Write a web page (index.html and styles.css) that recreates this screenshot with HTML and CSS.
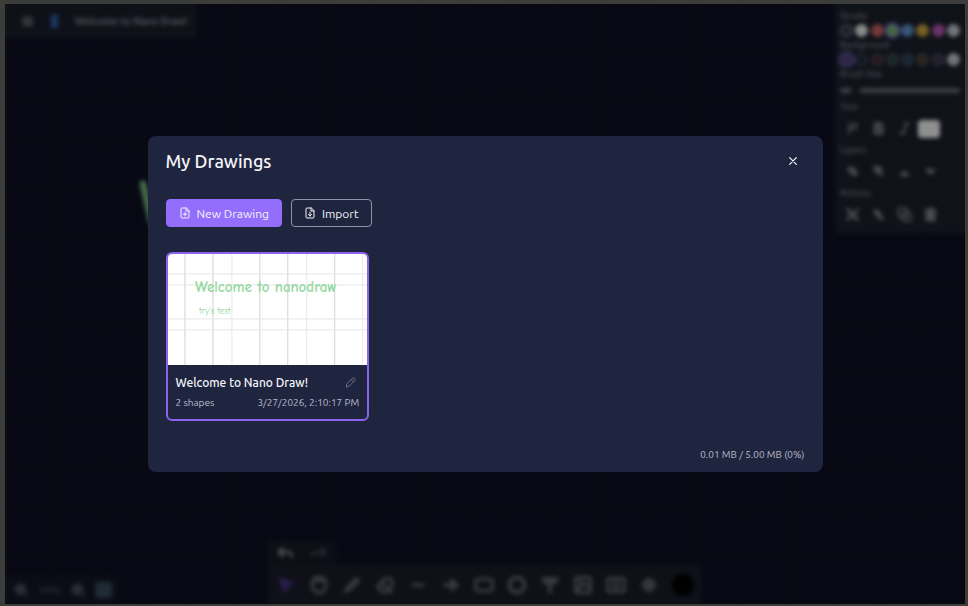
FILE: index.html
```html
<!DOCTYPE html>
<html lang="en">

<head>
    <meta charset="UTF-8">
    <meta name="viewport" content="width=device-width, initial-scale=1.0">
    <title>Nano Draw</title>
    <link rel="stylesheet" href="styles.css">
</head>

<body>
    <div class="app">
        <!-- Canvas -->
        <svg class="canvas" aria-hidden="true">
            <path d="M138 180 L147 218 L158 190" />
        </svg>

        <div class="top-row">
            <header class="title-bar">
                <button class="icon-btn" aria-label="Menu">
                    <svg viewBox="0 0 24 24"><path d="M4 6h16M4 12h16M4 18h16" stroke-width="4" /></svg>
                </button>
                <span class="logo"></span>
                <span class="doc-name">Welcome to Nano Draw!</span>
            </header>

            <aside class="side-panel">
                <h3>Stroke</h3>
                <div class="swatches">
                    <button class="swatch none" aria-label="None"></button>
                    <button class="swatch white" aria-label="White"></button>
                    <button class="swatch red" aria-label="Red"></button>
                    <button class="swatch green selected" aria-label="Green"></button>
                    <button class="swatch blue" aria-label="Blue"></button>
                    <button class="swatch yellow" aria-label="Yellow"></button>
                    <button class="swatch pink" aria-label="Pink"></button>
                    <button class="swatch custom" aria-label="Custom"></button>
                </div>
                <h3>Background</h3>
                <div class="swatches dim">
                    <button class="swatch none selected" aria-label="No background"></button>
                    <button class="swatch none" aria-label="Dark background"></button>
                    <button class="swatch red" aria-label="Red background"></button>
                    <button class="swatch green" aria-label="Green background"></button>
                    <button class="swatch blue" aria-label="Blue background"></button>
                    <button class="swatch yellow" aria-label="Yellow background"></button>
                    <button class="swatch pink" aria-label="Pink background"></button>
                    <button class="swatch custom" aria-label="Custom background"></button>
                </div>
                <h3><label for="brush">Brush Size</label></h3>
                <input class="slider" id="brush" type="range" min="1" max="30" value="4">
                <h3>Text</h3>
                <div class="tools">
                    <button class="icon-btn" aria-label="Font"><svg viewBox="0 0 24 24"><path d="M7 20V5h12M7 12h9M17 5v7" stroke-width="3" /></svg></button>
                    <button class="icon-btn" aria-label="Bold"><svg viewBox="0 0 24 24"><path d="M7 4h6a4 4 0 0 1 0 8H7zM7 12h7a4 4 0 0 1 0 8H7z" stroke-width="5" /></svg></button>
                    <button class="icon-btn" aria-label="Italic"><svg viewBox="0 0 24 24"><path d="M12 4h7M5 20h7M16 4 9 20" stroke-width="3" /></svg></button>
                    <button class="size-btn" aria-label="Text size"></button>
                </div>
                <h3>Layers</h3>
                <div class="tools">
                    <button class="icon-btn" aria-label="To front"><svg viewBox="0 0 24 24"><path d="m5 8 6-2 8 8-4 4zM13 9l-2 5" stroke-width="4" /></svg></button>
                    <button class="icon-btn" aria-label="Forward"><svg viewBox="0 0 24 24"><path d="M6 6h9v7H9zM15 14l2 3" stroke-width="5" /></svg></button>
                    <button class="icon-btn" aria-label="Backward"><svg viewBox="0 0 24 24"><path d="m6 18 6-5 6 5M9 17h6" stroke-width="4" /></svg></button>
                    <button class="icon-btn" aria-label="To back"><svg viewBox="0 0 24 24"><path d="m6 9 6 6 6-6M9 9h3" stroke-width="4" /></svg></button>
                </div>
                <h3>Actions</h3>
                <div class="tools">
                    <button class="icon-btn" aria-label="Cut"><svg viewBox="0 0 24 24"><path d="M4 4l16 16M20 4 4 20M4 4h3M20 20h-3M8 12h8" stroke-width="4" /></svg></button>
                    <button class="icon-btn" aria-label="Link"><svg viewBox="0 0 24 24"><path d="m7 5 5 3 3 7 4 4M6 8l4 5 4 5" stroke-width="4" /></svg></button>
                    <button class="icon-btn" aria-label="Duplicate"><svg viewBox="0 0 24 24"><rect x="2" y="2" width="14" height="14" rx="4" stroke-width="3" /><rect x="9" y="9" width="14" height="13" rx="4" stroke-width="3" /></svg></button>
                    <button class="icon-btn" aria-label="Delete"><svg viewBox="0 0 24 24"><path d="M4 6h16M9 6V3h6v3M6 6v15h12V6M10 10v7M14 10v7" stroke-width="4" /></svg></button>
                </div>
            </aside>
        </div>

        <div class="bottom-row">
            <div class="zoom-bar">
                <button class="icon-btn" aria-label="Zoom out"><svg viewBox="0 0 24 24"><circle cx="11" cy="11" r="8" fill="currentColor" /><path d="m16 16 5 5" stroke-width="4" /></svg></button>
                <span>100%</span>
                <button class="icon-btn" aria-label="Zoom in"><svg viewBox="0 0 24 24"><circle cx="11" cy="11" r="8" fill="currentColor" /><path d="m16 16 5 5" stroke-width="4" /></svg></button>
                <button class="grid-btn" aria-label="Grid"></button>
            </div>

            <div class="toolbar-wrap">
                <div class="history">
                    <button class="icon-btn" aria-label="Undo"><svg viewBox="0 0 24 24"><path d="M9 5 4 10l5 5M4 10h13q5 0 5 6" stroke-width="4" /></svg></button>
                    <button class="icon-btn faded" aria-label="Redo"><svg viewBox="0 0 24 24"><path d="m15 5 5 5-5 5M20 10H7q-5 0-5 6" stroke-width="3" /></svg></button>
                </div>
                <div class="toolbar">
                    <button class="icon-btn active" aria-label="Select"><svg viewBox="0 0 24 24"><path d="m4 4 17 6-7 3-3 8z" fill="currentColor" /></svg></button>
                    <button class="icon-btn" aria-label="Pan"><svg viewBox="0 0 24 24"><path d="M4 12V7l4-4h8l4 4v9l-5 5H9l-5-5zM7 7h10" stroke-width="4" /></svg></button>
                    <button class="icon-btn" aria-label="Pencil"><svg viewBox="0 0 24 24"><path d="m3 21 2-6L17 3l4 4L9 19z" fill="currentColor" /></svg></button>
                    <button class="icon-btn" aria-label="Eraser"><svg viewBox="0 0 24 24"><path d="m3 14 9-10h7l2 8-7 8H8zM8 9l8 8M7 20h13" stroke-width="4" /></svg></button>
                    <button class="icon-btn" aria-label="Line"><svg viewBox="0 0 24 24"><path d="M6 12h12" stroke-width="4" /></svg></button>
                    <button class="icon-btn" aria-label="Arrow"><svg viewBox="0 0 24 24"><path d="M5 12h14M13 7l5 5-5 5" stroke-width="5" /></svg></button>
                    <button class="icon-btn" aria-label="Rectangle"><svg viewBox="0 0 24 24"><rect x="2" y="5" width="20" height="14" rx="3" stroke-width="4" /></svg></button>
                    <button class="icon-btn" aria-label="Ellipse"><svg viewBox="0 0 24 24"><circle cx="12" cy="12" r="9" stroke-width="5" /></svg></button>
                    <button class="icon-btn" aria-label="Text"><svg viewBox="0 0 24 24"><path d="M4 5h16M6 9h12M12 7v13" stroke-width="5" /></svg></button>
                    <button class="icon-btn" aria-label="Image"><svg viewBox="0 0 24 24"><rect x="3" y="3" width="18" height="18" rx="2" stroke-width="4" /><path d="m5 18 8-8 7 5M8 8h2" stroke-width="4" /></svg></button>
                    <button class="icon-btn" aria-label="Camera"><svg viewBox="0 0 24 24"><rect x="2" y="4" width="20" height="16" rx="2" stroke-width="4" /><circle cx="12" cy="12" r="4" stroke-width="3" /></svg></button>
                    <button class="icon-btn" aria-label="Laser"><svg viewBox="0 0 24 24"><path d="M12 4v16M4 12h16M7 7l10 10M17 7 7 17" stroke-width="4" /></svg></button>
                    <button class="color-btn" aria-label="Current color"></button>
                </div>
            </div>
        </div>
    </div>

    <!-- My Drawings dialog -->
    <div class="overlay">
        <div class="modal" role="dialog" aria-labelledby="modalTitle">
            <div class="modal-header">
                <h2 id="modalTitle">My Drawings</h2>
                <button class="close-btn" aria-label="Close">
                    <svg viewBox="0 0 24 24"><path d="M4 4l16 16M20 4 4 20" stroke-width="3" /></svg>
                </button>
            </div>

            <div class="modal-actions">
                <button class="btn btn-primary">
                    <svg viewBox="0 0 24 24"><path d="M14 2H6a2 2 0 0 0-2 2v16a2 2 0 0 0 2 2h12a2 2 0 0 0 2-2V8zM14 2v6h6M12 11v7M8.500 14.500h7" /></svg>
                    New Drawing
                </button>
                <button class="btn">
                    <svg viewBox="0 0 24 24"><path d="M14 2H6a2 2 0 0 0-2 2v16a2 2 0 0 0 2 2h12a2 2 0 0 0 2-2V8zM14 2v6h6M12 10v8M9 15l3 3 3-3" /></svg>
                    Import
                </button>
            </div>

            <div class="drawings">
                <article class="card">
                    <svg class="thumb" viewBox="0 0 200 111">
                        <path class="grid-strong" d="M17 0v111M45 0v111M92 0v111M120 0v111M167 0v111" />
                        <path class="grid-light" d="M64 0v111M139 0v111M195 0v111M0 20h200M0 31h200M0 65h200M0 76h200" />
                        <text class="thumb-title" x="27" y="38">Welcome to nanodraw</text>
                        <text class="thumb-note" x="31" y="60">try's test</text>
                    </svg>
                    <div class="card-info">
                        <div class="card-row">
                            <h3>Welcome to Nano Draw!</h3>
                            <button class="edit-btn" aria-label="Rename">
                                <svg viewBox="0 0 24 24"><path d="m3 21 1-6L16 3a3 3 0 0 1 5 5L9 20zM14 6l4 4" /></svg>
                            </button>
                        </div>
                        <div class="card-row meta">
                            <span>2 shapes</span>
                            <span>3/27/2026, 2:10:17 PM</span>
                        </div>
                    </div>
                </article>
            </div>

            <div class="storage">0.01 MB / 5.00 MB (0%)</div>
        </div>
    </div>
</body>

</html>
```
FILE: styles.css
```css
* {
    margin: 0;
    padding: 0;
    box-sizing: border-box;
    font-family: Ubuntu, 'Noto Sans', sans-serif;
}

body {
    height: 100vh;
    border: solid #3c3d3a;
    border-width: 4px 3px 2px 5px;
    position: relative;
    overflow: hidden;
}

svg {
    display: block;
    fill: none;
    stroke: currentColor;
    stroke-width: 2;
    stroke-linecap: round;
    stroke-linejoin: round;
}

button {
    background: none;
    border: none;
    color: inherit;
    cursor: pointer;
}

.app {
    height: 100%;
    display: flex;
    flex-direction: column;
    justify-content: space-between;
    color: #7d808c;
    background-color: #0d0e20;
    background-image: linear-gradient(90deg, #111323 1px, transparent 1px), linear-gradient(#111323 1px, transparent 1px);
    background-size: 46px 46px;
}

.canvas {
    position: absolute;
    inset: 0;
    width: 100%;
    height: 100%;
    color: #74b27d;
    stroke-width: 7;
}

.top-row {
    display: flex;
    justify-content: space-between;
    align-items: flex-start;
}

.title-bar {
    display: flex;
    align-items: center;
    gap: 17px;
    height: 34px;
    padding: 0 10px 0 16px;
    background: #1a1d2a;
}

.logo {
    width: 7px;
    height: 13px;
    background: #2c5ea6;
}

.doc-name {
    font-size: 10px;
    font-weight: 700;
}

.icon-btn svg {
    width: 13px;
    height: 13px;
}

/* Side panel */
.side-panel {
    width: 130px;
    padding: 6px 5px 3px;
    background: #1a1f2a;
}

.side-panel h3 {
    font-size: 9px;
    font-weight: 500;
    line-height: 12px;
}

.swatches {
    display: flex;
    justify-content: space-between;
    padding: 2px 0;
}

.swatch {
    width: 13px;
    height: 13px;
    border-radius: 50%;
}

.swatch.none {
    background: #2f3341;
    border: 2px solid #686c7a;
}

.swatch.white {
    background: #e6e6e6;
}

.swatch.red {
    background: #c4605f;
}

.swatch.green {
    background: #72a979;
}

.swatch.blue {
    background: #578fc4;
}

.swatch.yellow {
    background: #c8a03c;
}

.swatch.pink {
    background: #b354ae;
}

.swatch.custom {
    background: #c0c2cc;
}

.swatch.selected {
    box-shadow: 0 0 0 2px #5f4aa5;
}

.dim .swatch {
    border: 2px solid #454858;
}

.dim .none {
    background: #1f2433;
}

.dim .none.selected {
    background: #4d3f78;
}

.dim .red {
    background: #45282f;
}

.dim .green {
    background: #26443a;
}

.dim .blue {
    background: #263e52;
}

.dim .yellow {
    background: #493b2c;
}

.dim .pink {
    background: #3d2d4c;
}

.dim .custom {
    background: #c0c2cc;
    border-color: #c0c2cc;
}

.slider {
    display: block;
    appearance: none;
    width: 100%;
    height: 5px;
    margin: 8px 0;
    border-radius: 3px;
    background: #656874;
}

.slider::-webkit-slider-thumb {
    appearance: none;
    width: 9px;
    height: 9px;
    background: #1a1f2a;
}

.tools {
    display: flex;
    align-items: center;
    gap: 11px;
    height: 31px;
    padding-left: 5px;
}

.tools svg {
    width: 15px;
    height: 15px;
}

.size-btn {
    width: 22px;
    height: 18px;
    margin-left: -5px;
    border-radius: 4px;
    background: #efefef;
}

/* Bottom bars */
.bottom-row {
    display: grid;
    grid-template-columns: 1fr auto 1fr;
    align-items: end;
}

.zoom-bar {
    display: flex;
    align-items: center;
    justify-self: start;
    gap: 9px;
    height: 28px;
    padding: 0 6px 0 8px;
    background: #131624;
    color: #42495a;
    font-size: 9px;
    font-weight: 700;
}

.zoom-bar svg {
    width: 16px;
    height: 16px;
}

.grid-btn {
    width: 17px;
    height: 16px;
    border-radius: 4px;
    background: #344858;
}

.history {
    display: flex;
    align-items: center;
    gap: 18px;
    width: 68px;
    height: 24px;
    padding: 0 8px;
    background: #161925;
}

.history svg {
    width: 17px;
    height: 17px;
}

.faded {
    opacity: 0.5;
}

.toolbar {
    display: flex;
    align-items: center;
    gap: 13px;
    height: 39px;
    padding: 0 8px;
    background: #191c29;
    color: #5c5f6a;
}

.toolbar svg {
    width: 20px;
    height: 20px;
}

.toolbar .active {
    color: #473186;
}

.color-btn {
    width: 22px;
    height: 22px;
    border-radius: 50%;
    background: #000;
}

/* Dialog */
.overlay {
    position: absolute;
    inset: 0;
    display: flex;
    align-items: center;
    justify-content: center;
    background: rgba(0, 0, 0, 0.4);
    backdrop-filter: blur(2px);
}

.modal {
    width: 90%;
    max-width: 675px;
    padding: 0 18px;
    border-radius: 8px;
    background: #20253f;
    color: #f4f5fa;
}

.modal-header {
    display: flex;
    align-items: center;
    justify-content: space-between;
    height: 50px;
}

.modal-header h2 {
    font-size: 18px;
    font-weight: 500;
}

.close-btn {
    padding: 7px;
}

.close-btn svg {
    width: 10px;
    height: 10px;
}

.modal-actions {
    display: flex;
    gap: 9px;
    padding: 13px 0 25px;
}

.btn {
    display: flex;
    align-items: center;
    gap: 6px;
    height: 28px;
    padding: 0 12px;
    border: 1px solid #8f93a6;
    border-radius: 4px;
    font-size: 12px;
    font-weight: 400;
}

.btn svg {
    width: 12px;
    height: 12px;
}

.btn-primary {
    background: #936dfc;
    border-color: #936dfc;
}

.drawings {
    display: grid;
    grid-template-columns: repeat(auto-fill, minmax(200px, 1fr));
    gap: 14px;
}

.card {
    border: 2px solid #8b62ee;
    border-radius: 6px;
    overflow: hidden;
}

.thumb {
    width: 100%;
    background: #fff;
    stroke-width: 1;
}

.grid-strong {
    stroke: #d2d2d4;
}

.grid-light {
    stroke: #e6e6e8;
}

.thumb text {
    stroke: none;
    fill: #96d9a2;
    font-family: 'Comic Neue', 'Comic Sans MS', 'Noto Sans', cursive;
}

.thumb .thumb-title {
    font-size: 15px;
    font-weight: 700;
}

.thumb .thumb-note {
    font-size: 9px;
}

.card-info {
    padding: 8px 8px 6px;
}

.card-row {
    display: flex;
    align-items: center;
    justify-content: space-between;
    height: 20px;
}

.card-row h3 {
    font-size: 12px;
    font-weight: 500;
}

.edit-btn {
    padding: 3px;
    color: #74788c;
}

.edit-btn svg {
    width: 11px;
    height: 11px;
}

.meta {
    color: #b9bccb;
    font-size: 10px;
}

.storage {
    padding: 25px 0 8px;
    color: #b9bccb;
    font-size: 10px;
    line-height: 18px;
    text-align: right;
}
```
